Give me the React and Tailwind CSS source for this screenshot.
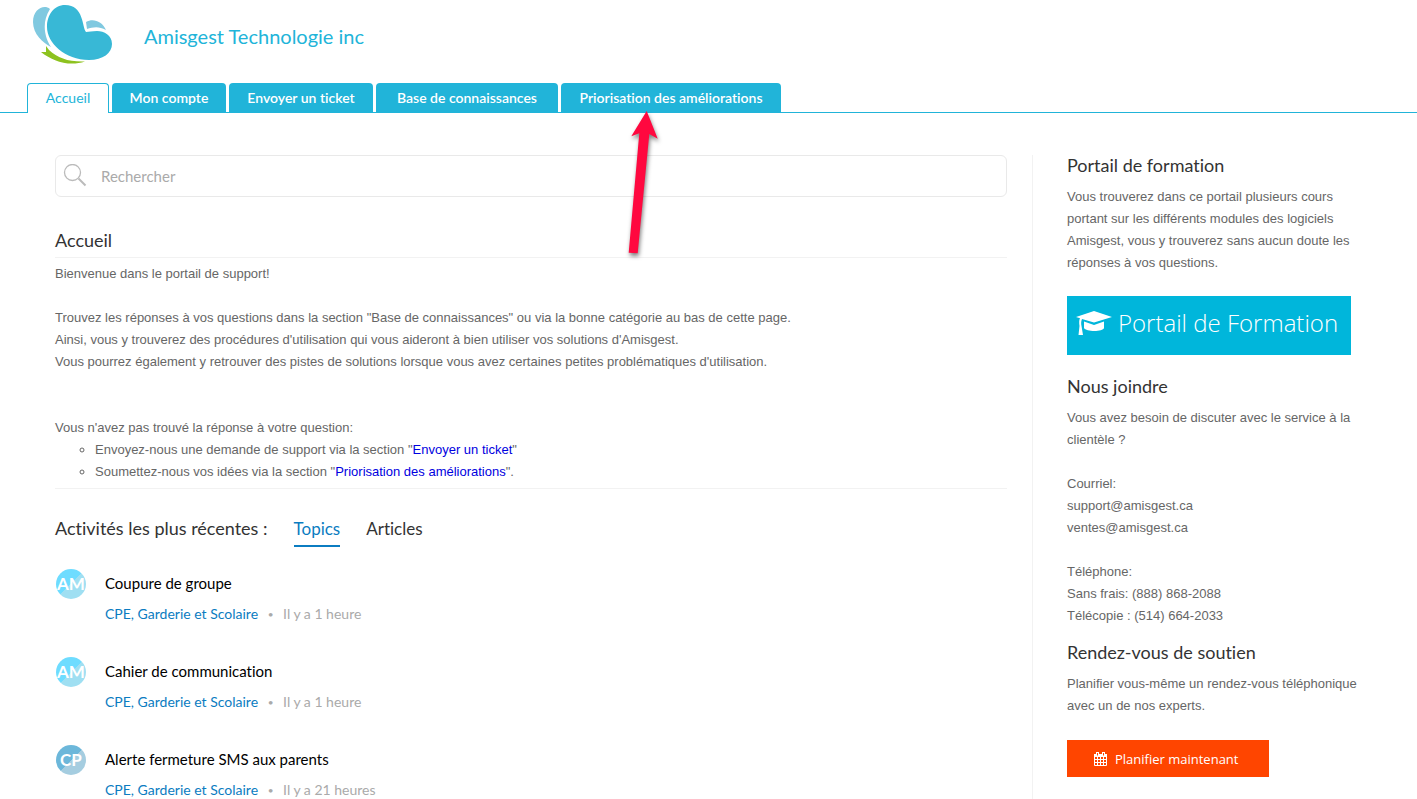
import React from 'react';

const TABS = [
    { label: 'Accueil', width: 'w-[82px]' },
    { label: 'Mon compte', width: 'w-[114px]' },
    { label: 'Envoyer un ticket', width: 'w-[144px]' },
    { label: 'Base de connaissances', width: 'w-[182px]' },
    { label: 'Priorisation des améliorations', width: 'w-[220px]' },
];

const TOPICS = [
    { initials: 'AM', title: 'Coupure de groupe', time: 'Il y a 1 heure', avatar: 'from-[#9fdff2] to-[#6edcff]' },
    { initials: 'AM', title: 'Cahier de communication', time: 'Il y a 1 heure', avatar: 'from-[#9fdff2] to-[#6edcff]' },
    { initials: 'CP', title: 'Alerte fermeture SMS aux parents', time: 'Il y a 21 heures', avatar: 'from-[#a5cde0] to-[#6cb7da]' },
];

const Logo = () => (
    <svg width="80" height="60" viewBox="0 0 80 60" aria-hidden="true">
        <path d="M18 4C12 -1 1 4 1 17C1 29 11 38 19 42C13 33 9 18 18 4Z" fill="#80c9e0" />
        <path d="M54 17C61 13 70 16 74 25C67 21 61 22 55 24Z" fill="#80c9e0" />
        <path d="M33 0C22 0 15 10 15 22C15 38 33 55 57 55C71 55 80 48 80 39C80 30 72 26 65 26C60 26 57 27 54 27C50 22 52 0 33 0Z" fill="#38b8d6" />
        <path d="M14 41L17 45C26 53 36 57 53 56.500C37 62 20 56 9 47L14 47Z" fill="#8dc21f" />
    </svg>
);

const Arrow = () => (
    <svg className="pointer-events-none absolute top-[22px] left-[59px]" width="46" height="156" viewBox="0 0 46 156" aria-hidden="true">
        <path
            d="M26.7 6L37.7 33.7L29.3 29L17.7 148.3L8.7 147.7L19.3 28.3L11.3 31.3Z"
            fill="#ff083f"
            style={{ filter: 'drop-shadow(1px 3px 2px rgba(0,0,0,0.5))' }}
        />
    </svg>
);

const GradCap = () => (
    <svg width="36" height="25" viewBox="0 0 36 25" fill="#fff" aria-hidden="true">
        <path d="M0 6L18 0L36 6L18 11.500L6 8C5 10 5 13 5.500 15L7 24H2.500L3.500 15C3 12 3 9 4 7.300Z" />
        <path d="M8 10.500L18 14L28 10.500V17C27 21 10 21 8 17Z" />
    </svg>
);

const Calendar = () => (
    <svg width="13" height="14" viewBox="0 0 13 14" fill="none" stroke="#fff" aria-hidden="true">
        <path d="M0.500 3.500V13.500H12.500V3.500M3.500 4V13M6.500 4V13M9.500 4V13M1 7.500H12M1 10.500H12" />
        <path d="M0 3.500H13" strokeWidth="3" />
        <path d="M3.500 0V4M9.500 0V4" strokeWidth="3" />
        <path d="M3.500 1V3.500M9.500 1V3.500" stroke="#ff4500" />
    </svg>
);

const SectionTitle = ({ children }) => (
    <h2 className="font-['Lato',sans-serif] text-[18px] leading-5 text-[#333]">{children}</h2>
);

const App = () => (
    <div className="bg-white font-['Liberation_Sans',sans-serif] text-[13px] leading-[22px] text-[#666] [font-variant-ligatures:none]">
        <header className="border-b border-[#21b4d9]">
            <div className="flex h-[83px] gap-8 pt-[5px] pl-8">
                <Logo />
                <h1 className="pt-[19px] font-['Lato',sans-serif] text-[20px] leading-6 text-[#21b4d9]">Amisgest Technologie inc</h1>
            </div>
            <nav className="flex gap-[3px] pl-[27px] text-center font-['Lato',sans-serif] text-[14px] leading-7">
                {TABS.map((tab, i) => (
                    <div key={tab.label} className={`relative ${tab.width}`}>
                        <a
                            href="#"
                            className={
                                i === 0
                                    ? '-mb-px block rounded-t border border-b-0 border-[#21b4d9] bg-white pb-px text-[#21b4d9]'
                                    : 'block rounded-t bg-[#21b4d9] pt-px font-semibold text-white'
                            }
                        >
                            {tab.label}
                        </a>
                        {i === TABS.length - 1 && <Arrow />}
                    </div>
                ))}
            </nav>
        </header>

        <div className="flex gap-[25px] pt-[42px] pl-[55px]">
            <main className="min-w-0 flex-1">
                <label className="flex h-[42px] items-center gap-[14px] rounded-md border border-[#e9e9e9] px-[7px]">
                    <svg width="24" height="24" viewBox="0 0 24 24" fill="none" stroke="#bbb" aria-hidden="true">
                        <circle cx="9.500" cy="8.500" r="8" strokeWidth="1.300" />
                        <path d="M15.500 14.500L22.500 21.500" strokeWidth="2" />
                    </svg>
                    <input
                        type="text"
                        aria-label="Rechercher"
                        placeholder="Rechercher"
                        className="flex-1 font-['Lato',sans-serif] text-[15px] leading-6 text-[#333] outline-none placeholder:text-[#aaa]"
                    />
                </label>

                <section className="mt-[33px] border-b border-[#f2f2f2] pb-[5px]">
                    <div className="mb-[5px] border-b border-[#f2f2f2] pb-[7px]">
                        <SectionTitle>Accueil</SectionTitle>
                    </div>
                    <p>Bienvenue dans le portail de support!</p>
                    <p className="mt-[22px]">
                        Trouvez les réponses à vos questions dans la section "Base de connaissances" ou via la bonne catégorie au bas de cette page.
                        <br />
                        Ainsi, vous y trouverez des procédures d'utilisation qui vous aideront à bien utiliser vos solutions d'Amisgest.
                        <br />
                        Vous pourrez également y retrouver des pistes de solutions lorsque vous avez certaines petites problématiques d'utilisation.
                    </p>
                    <p className="mt-11">Vous n'avez pas trouvé la réponse à votre question:</p>
                    <ul className="list-[circle] pl-10">
                        <li>
                            Envoyez-nous une demande de support via la section "<a href="#" className="text-[#0000e0]">Envoyer un ticket</a>"
                        </li>
                        <li>
                            Soumettez-nous vos idées via la section "<a href="#" className="text-[#0000e0]">Priorisation des améliorations</a>".
                        </li>
                    </ul>
                </section>

                <section className="pt-[29px]">
                    <div className="flex items-baseline gap-[26px] font-['Lato',sans-serif]">
                        <SectionTitle>Activités les plus récentes :</SectionTitle>
                        <button type="button" className="border-b-2 border-[#0b7cc1] pb-[5px] text-[17px] leading-[22px] text-[#0b7cc1]">Topics</button>
                        <button type="button" className="pb-[7px] text-[17px] leading-[22px] text-[#333]">Articles</button>
                    </div>
                    <ul className="mt-[22px] font-['Lato',sans-serif]">
                        {TOPICS.map((topic) => (
                            <li key={topic.title} className="flex h-[88px] gap-[19px] pl-px">
                                <span
                                    className={`flex size-[30px] shrink-0 items-center justify-center rounded-full bg-linear-to-tl from-50% to-50% text-[17px] font-bold text-white ${topic.avatar}`}
                                >
                                    {topic.initials}
                                </span>
                                <div>
                                    <a href="#" className="mt-[3px] block text-[15px] leading-[22px] text-black">{topic.title}</a>
                                    <p className="mt-[9px] flex text-[14px] text-[#aaa]">
                                        <a href="#" className="text-[#0b7cc1]">CPE, Garderie et Scolaire</a>
                                        <span className="w-[25px] text-center text-[10px]">•</span>
                                        <span>{topic.time}</span>
                                    </p>
                                </div>
                            </li>
                        ))}
                    </ul>
                </section>
            </main>

            <aside className="w-[385px] shrink-0 border-l border-[#f2f2f2] pr-12 pl-[34px]">
                <SectionTitle>Portail de formation</SectionTitle>
                <p className="mt-[11px]">
                    Vous trouverez dans ce portail plusieurs cours portant sur les différents modules des logiciels Amisgest, vous y trouverez sans
                    aucun doute les réponses à vos questions.
                </p>
                <a
                    href="#"
                    className="mt-[22px] mb-[21px] flex h-[59px] w-[284px] items-center gap-[6px] bg-[#00b6db] pb-[5px] pl-[9px] font-['Open_Sans',sans-serif] text-[24px] font-light text-white"
                >
                    <GradCap />
                    Portail de Formation
                </a>
                <SectionTitle>Nous joindre</SectionTitle>
                <p className="mt-[11px]">Vous avez besoin de discuter avec le service à la clientèle ?</p>
                <p className="mt-[22px]">
                    Courriel:
                    <br />
                    support@amisgest.ca
                    <br />
                    ventes@amisgest.ca
                </p>
                <p className="mt-[22px] mb-[15px]">
                    Téléphone:
                    <br />
                    Sans frais: (888) 868-2088
                    <br />
                    Télécopie : (514) 664-2033
                </p>
                <SectionTitle>Rendez-vous de soutien</SectionTitle>
                <p className="mt-[11px]">Planifier vous-même un rendez-vous téléphonique avec un de nos experts.</p>
                <button
                    type="button"
                    className="mt-[23px] flex h-[37px] w-[202px] items-center gap-2 bg-[#ff4500] pl-[27px] font-['Open_Sans',sans-serif] text-[13px] text-white"
                >
                    <Calendar />
                    Planifier maintenant
                </button>
            </aside>
        </div>
    </div>
);

export default App;
